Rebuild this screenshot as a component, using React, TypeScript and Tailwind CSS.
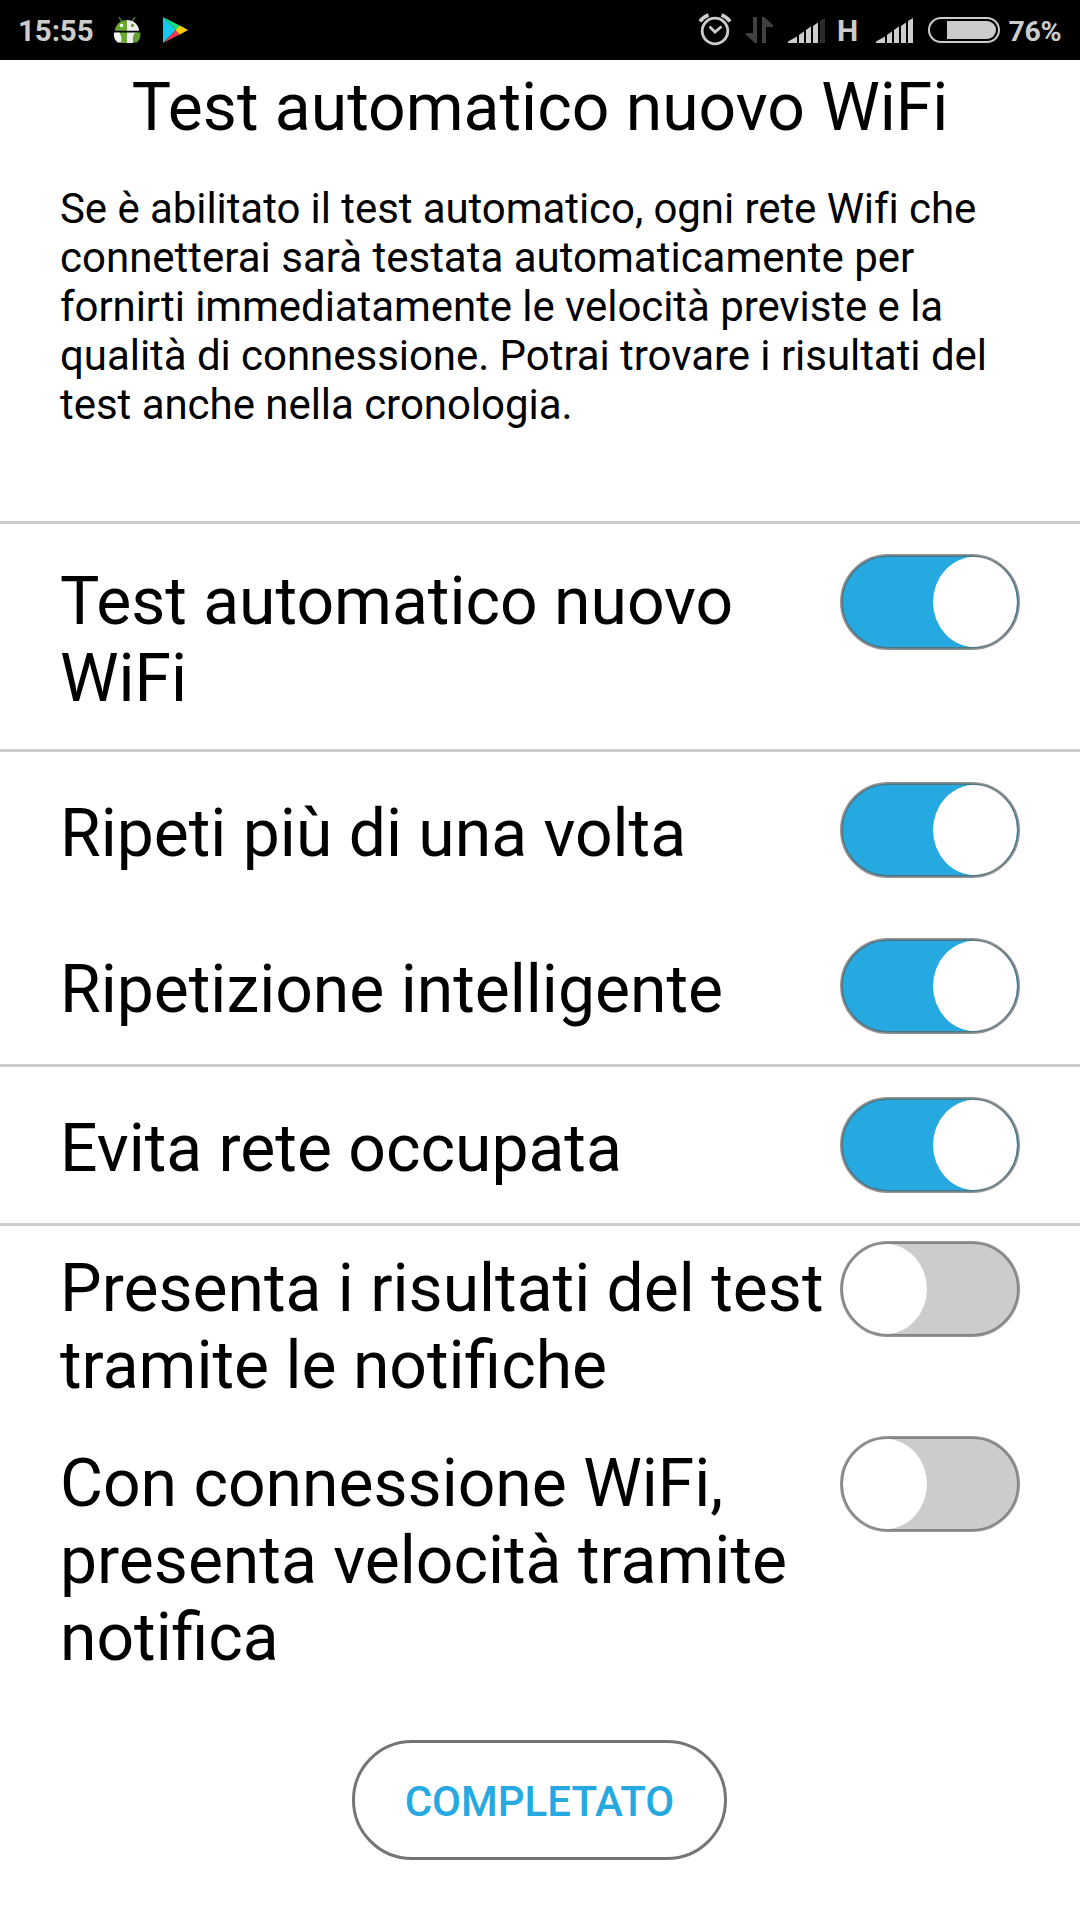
type SwitchRow = {
  label: string[];
  on: boolean;
  className: string;
};

const INTRO = [
  { text: "Se è abilitato il test automatico, ogni rete Wifi che", className: "tracking-[-0.07px]" },
  { text: "connetterai sarà testata automaticamente per", className: "tracking-normal" },
  { text: "fornirti immediatamente le velocità previste e la", className: "tracking-[-0.07px]" },
  { text: "qualità di connessione. Potrai trovare i risultati del", className: "tracking-[-0.045px]" },
  { text: "test anche nella cronologia.", className: "tracking-[-0.04px]" },
];

const ROWS: SwitchRow[] = [
  { label: ["Test automatico nuovo", "WiFi"], on: true, className: "h-[228px] border-t-3 pt-[30px]" },
  { label: ["Ripeti più di una volta"], on: true, className: "h-[159px] border-t-3 pt-[30px]" },
  { label: ["Ripetizione intelligente"], on: true, className: "h-[156px] pt-[30px]" },
  { label: ["Evita rete occupata"], on: true, className: "h-[159px] border-t-3 pt-[30px]" },
  { label: ["Presenta i risultati del test", "tramite le notifiche"], on: false, className: "h-[198px] border-t-3 pt-[15px]" },
  { label: ["Con connessione WiFi,", "presenta velocità tramite", "notifica"], on: false, className: "h-[319px] pt-[15px]" },
];

export default function App() {
  return (
    <div
      className="flex h-[1920px] w-[1080px] flex-col overflow-hidden bg-white text-black"
      style={{ fontFamily: "Roboto, sans-serif" }}
    >
      <StatusBar />
      <header className="h-[461px] shrink-0 px-[60px] pt-[9px]">
        <h1 className="text-center text-[66px] leading-[77px] whitespace-nowrap">Test automatico nuovo WiFi</h1>
        <p className="mt-[38px] text-[42px] leading-[49px] whitespace-nowrap [font-variant-ligatures:common-ligatures]">
          {INTRO.map((line) => (
            <span key={line.text} className={`block ${line.className}`}>
              {line.text}
            </span>
          ))}
        </p>
      </header>
      <main>
        {ROWS.map((row) => (
          <div key={row.label[0]} className={`flex items-start justify-between border-[#cccccc] px-[60px] ${row.className}`}>
            <div className={`text-[66px] leading-[77px] whitespace-nowrap ${row.label.length > 1 ? "pt-[9px]" : "pt-[13px]"}`}>
              {row.label.map((line) => (
                <div key={line}>{line}</div>
              ))}
            </div>
            <Switch on={row.on} />
          </div>
        ))}
      </main>
      <button className="ml-[352px] h-[120px] w-[375px] shrink-0 rounded-full border-3 border-[#757575] pt-[2px] text-[42px] font-medium text-[#26a9e1]">
        COMPLETATO
      </button>
    </div>
  );
}

function Switch({ on }: { on: boolean }) {
  return (
    <svg width="180" height="96" viewBox="0 0 180 96" className="shrink-0">
      <rect x="1.5" y="1.5" width="177" height="93" rx="46.5" fill={on ? "#26a9e1" : "#cccccc"} />
      <ellipse cx={on ? 135 : 45} cy="48" rx="42" ry="45.2" fill="#fff" />
      <rect x="1.5" y="1.5" width="177" height="93" rx="46.5" fill="none" stroke="#5c5a58" strokeOpacity="0.65" strokeWidth="3" />
    </svg>
  );
}

function StatusBar() {
  return (
    <div className="flex h-[60px] shrink-0 items-center bg-black text-[#cccccc]">
      <span className="ml-[18px] w-[77px] pt-[2px] text-[29.5px] leading-[58px] font-bold tracking-[-0.1px]">15:55</span>
      <AndroidIcon />
      <PlayIcon />
      <div className="grow" />
      <svg width="382" height="60" viewBox="698 0 382 60" className="shrink-0">
        {/* alarm */}
        <g fill="none" stroke="#cccccc" strokeWidth="2.8">
          <circle cx="715" cy="31" r="12.8" />
          <path d="M709.5 26.5l5.5 5.5 6.5-5.5" />
          <path d="M700 21.5q3-4.5 8.5-6.5M730 21.5q-3-4.5-8.500-6.500" strokeWidth="3.5" />
        </g>
        {/* mobile data */}
        <path d="M753 17h4v26h-2l-9-8v-2h7zM762 17h2l9 8v2h-7v16h-4z" fill="#404040" />
        {/* first sim */}
        <Signal x={788} dimLast />
        <Signal x={876} />
        {/* battery */}
        <rect x="929" y="18" width="70" height="24" rx="12" fill="none" stroke="#cccccc" strokeWidth="2" />
        <path d="M947 21h40a9 9 0 0 1 0 18h-40z" fill="#cccccc" />
        <text x="837" y="41" fill="#cccccc" fontSize="30" fontWeight="700">H</text>
        <text x="1008.5" y="40.5" fill="#cccccc" fontSize="28.5" fontWeight="700" textLength="53">76%</text>
      </svg>
    </div>
  );
}

function Signal({ x, dimLast = false }: { x: number; dimLast?: boolean }) {
  return (
    <g transform={`translate(${x} 0)`} fill="#cccccc">
      <path d="M0 43v-1.5l9-5V43zM11 43V35l5-3.5V43zM18 43V30l5-3.5V43zM25 43V26l5-3.5V43z" />
      <path d="M32 43V21l5-3V43z" fill={dimLast ? "#2b2b2b" : "#cccccc"} />
    </g>
  );
}

function AndroidIcon() {
  return (
    <svg width="30" height="60" viewBox="112 0 30 60" className="ml-[17px] shrink-0">
      <path d="M119 17l3 5M135 17l-3 5" stroke="#5f9a35" strokeWidth="1.2" />
      <path d="M115 30.8a12 10.8 0 0 1 12-10.800v10.800z" fill="#6aa832" />
      <path d="M127 20a12 10.8 0 0 1 12 10.800h-12z" fill="#eeeeee" />
      <circle cx="121.500" cy="25.5" r="1.7" fill="#fff" />
      <circle cx="132.500" cy="25.5" r="1.7" fill="#6aa832" />
      {/* two-tone body with the arms over it */}
      <path d="M117 32.500h10V43h-6z" fill="#6aa832" />
      <path d="M127 32.500h10L133 43h-6z" fill="#eeeeee" />
      <path d="M114 32.500h5.500q3 5.500 1.500 10h-3.500q-4.500-4-3.500-10z" fill="#f4f4f4" />
      <path d="M140.300 32.500h-5.500q-3 5.500-1.500 10h3.500q4.500-4 3.500-10z" fill="#62a033" />
    </svg>
  );
}

function PlayIcon() {
  return (
    <svg width="28" height="60" viewBox="162 0 28 60" className="ml-[20px] shrink-0">
      <path d="M163 17v26l13-13z" fill="#12c8f5" />
      <path d="M163 17l17.500 9-4.500 4z" fill="#12e07e" />
      <path d="M163 43l17.500-9-4.500-4z" fill="#f23b4c" />
      <path d="M180 25.500l8 4.500-8 4.500-4.500-4.500z" fill="#ffcc08" />
    </svg>
  );
}
